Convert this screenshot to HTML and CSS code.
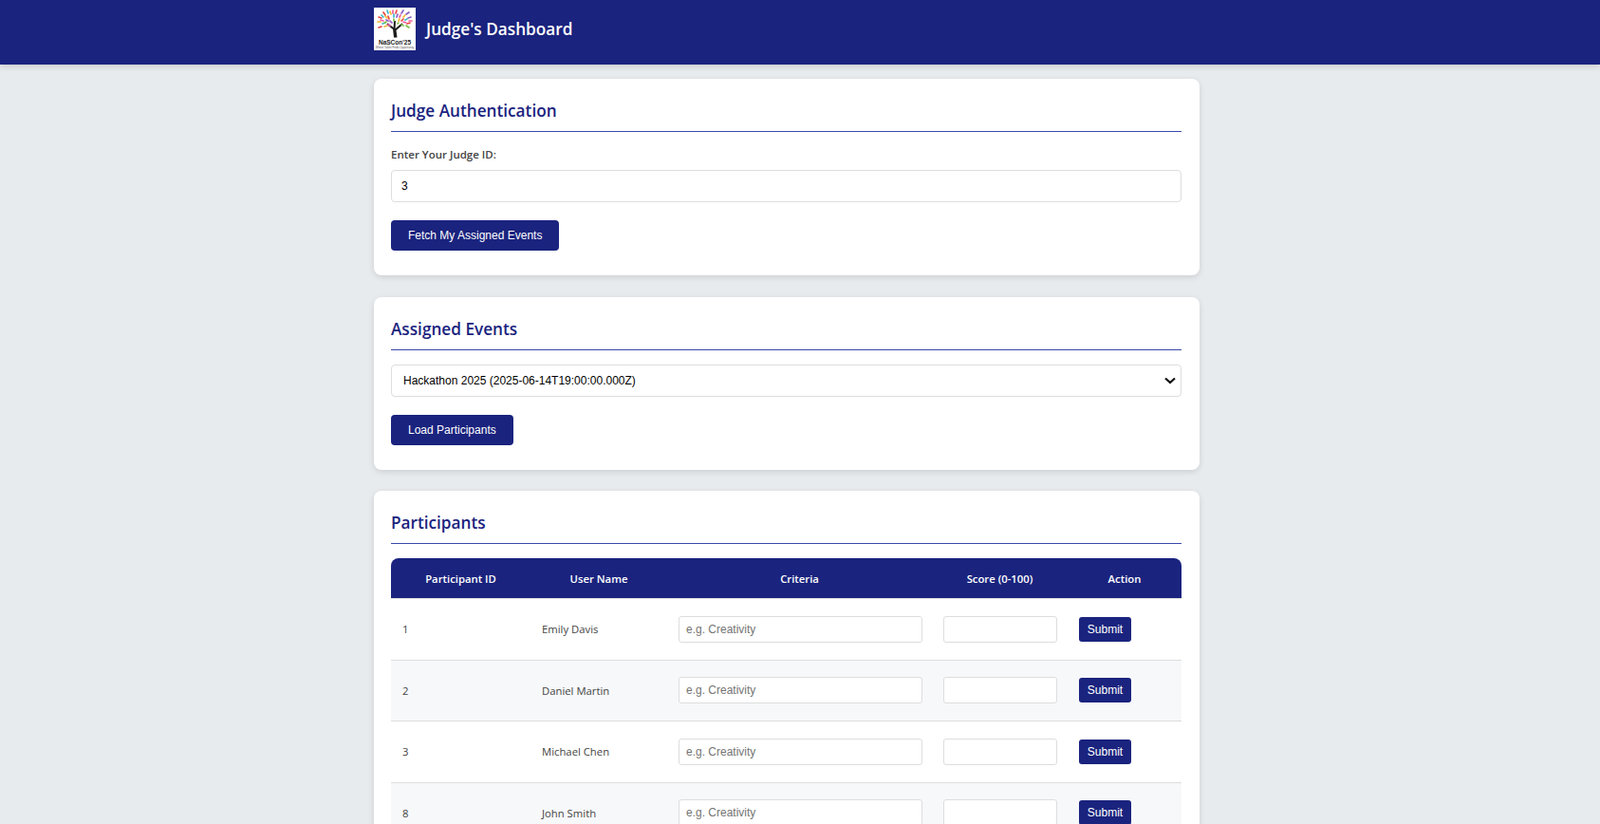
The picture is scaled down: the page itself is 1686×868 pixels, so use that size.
FILE: index.html
```html
<!DOCTYPE html>
<html lang="en">
<head>
<meta charset="utf-8">
<title>Judge's Dashboard</title>
<link rel="stylesheet" href="styles.css">
</head>
<body>
<header class="topbar">
  <div class="topbar-inner">
    <div class="logo">
      <svg class="logo-tree" viewBox="0 0 44 32" aria-hidden="true">
        <path d="M22 31.5 L21 22.5 L14 17 M21.5 24 L22 14 M22 24 L30 17 M23.5 31.5 L22.5 24" stroke="#1c1c1c" stroke-width="2" fill="none"/>
        <g stroke-width="1.7" stroke-linecap="round" fill="none">
          <path d="M5 10l3 1M10 5l2 3M15 9l1 3M5 21l3-1M24 3l-1 3M31 12l-2 2M38 16l-3 1" stroke="#e8483f"/>
          <path d="M25 7l-1 3M31 3l-2 3M37 5l-3 2M39 10l-3 1M17 14l2 2M13 13l2 1" stroke="#8e5cc4"/>
          <path d="M12 9l2 2M17 4l1 3M27 12l-1 2M33 8l-2 2M4 15l3 0M11 20l3-1" stroke="#f4b532"/>
          <path d="M8 8l2 2M14 3l1 3M9 17l3-1M21 7l0 3M35 12l-2 1" stroke="#39b8c8"/>
          <path d="M40 14l-3 0M34 16l-3-1M20 3l0 3M7 13l3 1M28 8l-1 2M17 19l-2-1" stroke="#ec5fa0"/>
          <path d="M37 21l-3-2M31 19l-2-1M11 16l2-1M21 12l0 2M26 16l-1 1" stroke="#7cc04b"/>
        </g>
      </svg>
      <span class="logo-name">NaSCon'25</span>
      <span class="logo-tag">Where Talent Finds Opportunity</span>
    </div>
    <h1 class="brand">Judge's Dashboard</h1>
  </div>
</header>
<main class="container">
  <section class="card card-auth">
    <h2 class="card-title">Judge Authentication</h2>
    <label class="field-label" for="judge">Enter Your Judge ID:</label>
    <input class="control" id="judge" type="text" value="3">
    <button class="btn" type="button">Fetch My Assigned Events</button>
  </section>
  <section class="card card-events">
    <h2 class="card-title">Assigned Events</h2>
    <div class="select-wrap">
      <select class="control select">
        <option>Hackathon 2025 (2025-06-14T19:00:00.000Z)</option>
      </select>
      <svg class="chevron" viewBox="0 0 12 8" aria-hidden="true"><path d="M1 1.5l5 4.5 5-4.5" fill="none" stroke="#111" stroke-width="2.2"/></svg>
    </div>
    <button class="btn" type="button">Load Participants</button>
  </section>
  <section class="card">
    <h2 class="card-title">Participants</h2>
    <table class="grid">
      <colgroup>
        <col class="c-id"><col class="c-name"><col class="c-crit"><col class="c-score"><col class="c-act">
      </colgroup>
      <thead>
        <tr><th>Participant ID</th><th>User Name</th><th>Criteria</th><th>Score (0-100)</th><th>Action</th></tr>
      </thead>
      <tbody>
        <tr><td>1</td><td>Emily Davis</td><td><input class="cell-input crit" placeholder="e.g. Creativity"></td><td><input class="cell-input score"></td><td><button class="btn-small" type="button">Submit</button></td></tr>
        <tr><td>2</td><td>Daniel Martin</td><td><input class="cell-input crit" placeholder="e.g. Creativity"></td><td><input class="cell-input score"></td><td><button class="btn-small" type="button">Submit</button></td></tr>
        <tr><td>3</td><td>Michael Chen</td><td><input class="cell-input crit" placeholder="e.g. Creativity"></td><td><input class="cell-input score"></td><td><button class="btn-small" type="button">Submit</button></td></tr>
        <tr><td>8</td><td>John Smith</td><td><input class="cell-input crit" placeholder="e.g. Creativity"></td><td><input class="cell-input score"></td><td><button class="btn-small" type="button">Submit</button></td></tr>
      </tbody>
    </table>
  </section>
</main>
</body>
</html>
```
FILE: styles.css
```css
* { box-sizing: border-box; }
html, body { height: 100%; overflow: hidden; }
body {
  margin: 0;
  padding-right: 28px;
  background: #e8ebee;
  color: #333;
  font-family: "Open Sans", "Noto Sans", sans-serif;
}
.topbar {
  height: 68px;
  margin-right: -28px;
  padding-right: 28px;
  background: #1a237e;
  box-shadow: 0 2px 6px rgba(0,0,0,.15);
}
.topbar-inner {
  width: 870px;
  margin: 0 auto;
  display: flex;
  align-items: center;
  gap: 11px;
  padding-top: 8px;
}
.logo {
  width: 44px;
  height: 45px;
  background: #fff;
  display: flex;
  flex-direction: column;
  align-items: center;
  overflow: hidden;
}
.logo-tree { width: 44px; height: 32px; flex: none; }
.logo-name { font: 700 6.5px/7px "Liberation Sans", sans-serif; color: #1c1c1c; margin-top: 1px; }
.logo-tag { font: 2.9px/4px "Liberation Sans", sans-serif; color: #555; white-space: nowrap; }
.brand {
  margin: 0;
  font-size: 17.2px;
  font-weight: 600;
  color: #fff;
}
.container { width: 870px; margin: 15px auto 0; }
.card {
  background: #fff;
  border-radius: 8px;
  box-shadow: 0 2px 6px rgba(0,0,0,.12);
  padding: 18px 19px 18px 18px;
  margin-bottom: 22px;
}
.card-auth { height: 207px; margin-bottom: 23px; }
.card-events { height: 182px; }
.card-title {
  margin: 0 0 15px;
  height: 38px;
  padding-top: 3px;
  font-size: 17.2px;
  line-height: 26px;
  font-weight: 600;
  color: #1a237e;
  border-bottom: 1px solid #3949ab;
}
.field-label {
  display: block;
  margin: 9px 0 8px;
  font-size: 11.5px;
  line-height: 17px;
  font-weight: 600;
  color: #444;
}
.control {
  display: block;
  width: 100%;
  height: 34px;
  border: 1px solid #ddd;
  border-radius: 4px;
  background: #fff;
  padding: 0 10px;
  font: 12px "Liberation Sans", Arial, sans-serif;
  color: #000;
  outline: none;
}
.select-wrap { position: relative; }
.select { appearance: none; padding: 0 12px; }
.chevron {
  position: absolute;
  right: 6px;
  top: 13px;
  width: 12px;
  height: 8px;
  pointer-events: none;
}
.btn {
  display: block;
  margin-top: 19px;
  height: 32px;
  padding: 0 18px;
  border: 0;
  border-radius: 4px;
  background: #1a237e;
  color: #fff;
  font: 12px "Liberation Sans", Arial, sans-serif;
}
.grid {
  width: 833px;
  table-layout: fixed;
  border-collapse: separate;
  border-spacing: 0;
  font-size: 11.3px;
}
.c-id { width: 147px; }
.c-name { width: 144px; }
.c-crit { width: 279px; }
.c-score { width: 143px; }
.c-act { width: 120px; }
.grid th {
  height: 43px;
  background: #1a237e;
  color: #fff;
  font-weight: 600;
  text-align: center;
  padding: 0 12px;
  border-bottom: 1px solid #e0e0e0;
}
.grid th:first-child { border-top-left-radius: 8px; }
.grid th:last-child { border-top-right-radius: 8px; }
.grid td {
  height: 64.5px;
  padding: 0 12px;
  color: #444;
  border-bottom: 1px solid #ddd;
}
.grid tbody tr:nth-child(even) td { background: #f7f8fa; }
.cell-input {
  display: block;
  height: 28px;
  border: 1px solid #ddd;
  border-radius: 3px;
  background: #fff;
  padding: 0 7px;
  font: 12px "Liberation Sans", Arial, sans-serif;
  outline: none;
}
.cell-input::placeholder { color: #757575; }
.crit { width: 257px; }
.score { width: 120px; }
.btn-small {
  display: block;
  width: 55px;
  height: 26px;
  padding: 0;
  border: 0;
  border-radius: 3px;
  background: #1a237e;
  color: #fff;
  font: 12px "Liberation Sans", Arial, sans-serif;
}
```
